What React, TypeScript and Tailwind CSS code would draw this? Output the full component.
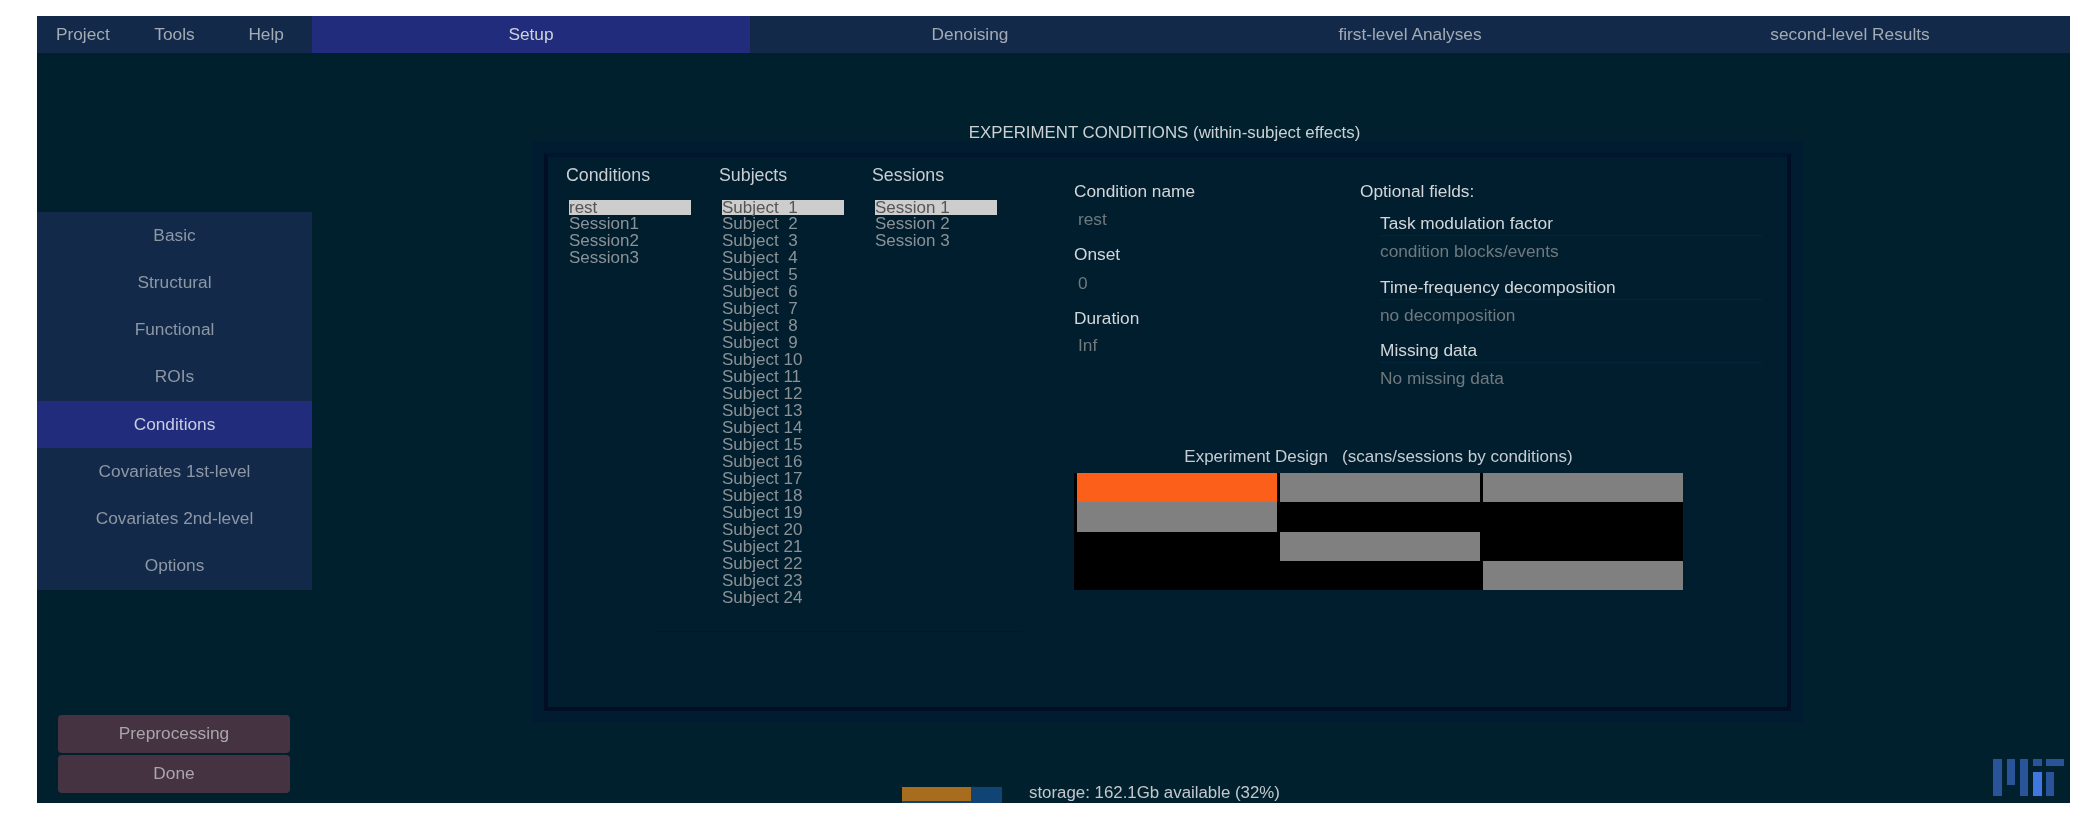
import React from "react";

const menus = ["Project", "Tools", "Help"];
const sections = ["Basic", "Structural", "Functional", "ROIs", "Conditions", "Covariates 1st-level", "Covariates 2nd-level", "Options"];
const conditions = ["rest", "Session1", "Session2", "Session3"];
const sessions = ["Session 1", "Session 2", "Session 3"];
const subjects = Array.from({ length: 24 }, (_, i) => (i < 9 ? `Subject  ${i + 1}` : `Subject ${i + 1}`));

function List({ title, items }: { title: string; items: string[] }) {
  return (
    <div className="w-[153px] shrink-0">
      <div className="text-[17.8px] leading-5 text-[#c9ced2]">{title}</div>
      <div className="mt-[15px] ml-[3px] w-[122px] text-[17px] text-[#8b9296]">
        {items.map((item, i) =>
          i === 0 ? (
            <div key={item} className="mt-[2px] h-[15px] whitespace-pre bg-[#cdcdcd] leading-[15px] text-[#555555]">
              {item}
            </div>
          ) : (
            <div key={item} className="whitespace-pre leading-[17px]">
              {item}
            </div>
          ),
        )}
      </div>
    </div>
  );
}

function Field({ label, value, className }: { label: string; value: string; className: string }) {
  return (
    <div className={className}>
      <div className="w-[382px] border-b border-[#02253a] pb-[2px] leading-5 text-[#d3d7da]">{label}</div>
      <div className="mt-[5px] leading-5 text-[#70797e]">{value}</div>
    </div>
  );
}

function MitLogo() {
  return (
    <svg width="71" height="37" viewBox="0 0 71 37" className="mb-[7px] mr-[6px] blur-[0.6px]">
      <g fill="#2a5499">
        <rect x="0" y="0" width="9" height="37" />
        <rect x="14" y="0" width="8" height="26" />
        <rect x="27" y="0" width="8" height="37" />
        <rect x="40" y="0" width="9" height="7" />
        <rect x="53" y="0" width="18" height="7" />
        <rect x="53" y="13" width="8" height="24" />
      </g>
      <rect x="40" y="13" width="9" height="24" fill="#3f78e0" />
    </svg>
  );
}

export default function App() {
  return (
    <div className="h-screen w-full overflow-hidden bg-white pt-4 pl-[37px] pr-6 font-['Liberation_Sans',Arial,sans-serif]">
      <div className="flex h-[787px] flex-col bg-[#01202e] text-[17.3px] blur-[0.4px]">
        <div className="flex h-[37px] shrink-0 items-center bg-[#12294a] text-[#a3abb4]">
          <div className="grid w-[275px] shrink-0 grid-cols-3 text-center">
            {menus.map((m) => (
              <span key={m}>{m}</span>
            ))}
          </div>
          <div className="flex h-full w-[438px] shrink-0 items-center justify-center bg-[#212d7c] text-[#d0d3da]">Setup</div>
          <div className="flex h-full flex-1 items-center justify-center">Denoising</div>
          <div className="flex h-full flex-1 items-center justify-center">first-level Analyses</div>
          <div className="flex h-full flex-1 items-center justify-center">second-level Results</div>
        </div>

        <div className="flex min-h-0 flex-1">
          <div className="flex w-[275px] shrink-0 flex-col pt-[159px]">
            <div className="bg-[#12294a] text-[#8e98a4]">
              {sections.map((s) => (
                <div
                  key={s}
                  className={
                    s === "Conditions"
                      ? "flex h-[47.25px] items-center justify-center bg-[#212d7c] text-[#c8cee0]"
                      : "flex h-[47.25px] items-center justify-center"
                  }
                >
                  {s}
                </div>
              ))}
            </div>
            <div className="mt-auto mb-[10px] ml-[21px] flex w-[232px] flex-col gap-[2px] text-[#aaa6ab]">
              <div className="flex h-[38px] items-center justify-center rounded-[4px] bg-[#453341]">Preprocessing</div>
              <div className="flex h-[38px] items-center justify-center rounded-[4px] bg-[#453341]">Done</div>
            </div>
          </div>

          <div className="flex min-w-0 flex-1 flex-col">
            <div className="ml-[232px] mt-[70px] w-[1247px] pr-[6px] text-center text-[16.85px] leading-5 text-[#cdd1d5]">
              EXPERIMENT CONDITIONS (within-subject effects)
            </div>
            <div className="ml-[232px] mt-[10px] flex h-[558px] w-[1247px] border-4 border-[#020d26] border-t-[#01152c] bg-[#001e2e] pl-[18px] shadow-[0_0_0_12px_#011b30]">
              <div className="flex w-[508px] shrink-0 flex-col pt-[8px]">
                <div className="flex">
                  <List title="Conditions" items={conditions} />
                  <List title="Subjects" items={subjects} />
                  <List title="Sessions" items={sessions} />
                </div>
                <div className="ml-[87px] mt-[25px] w-[370px] border-t border-[#011a29]" />
              </div>

              <div className="flex flex-col pt-[24px]">
                <div className="flex">
                  <div className="w-[286px] shrink-0 leading-5">
                    <div className="text-[#d3d7da]">Condition name</div>
                    <div className="mt-[8px] pl-[4px] text-[#70797e]">rest</div>
                    <div className="mt-[15px] text-[#d3d7da]">Onset</div>
                    <div className="mt-[9px] pl-[4px] text-[#70797e]">0</div>
                    <div className="mt-[15px] text-[#d3d7da]">Duration</div>
                    <div className="mt-[7px] pl-[4px] text-[#70797e]">Inf</div>
                  </div>
                  <div>
                    <div className="leading-5 text-[#d3d7da]">Optional fields:</div>
                    <div className="pl-[20px]">
                      <Field className="mt-[12px]" label="Task modulation factor" value="condition blocks/events" />
                      <Field className="mt-[16px]" label="Time-frequency decomposition" value="no decomposition" />
                      <Field className="mt-[15px]" label="Missing data" value="No missing data" />
                    </div>
                  </div>
                </div>

                <div className="mt-[59px] w-[609px] whitespace-pre text-center text-[17px] leading-5 text-[#c6ccd1]">
                  {"Experiment Design   (scans/sessions by conditions)"}
                </div>
                <div className="mt-[6px] grid h-[117px] w-[609px] grid-cols-[200px_200px_200px] grid-rows-4 gap-x-[3px] bg-black pl-[3px]">
                  <div className="bg-[#fb5f19]" />
                  <div className="bg-[#808080]" />
                  <div className="bg-[#808080]" />
                  <div className="bg-[#808080]" />
                  <div />
                  <div />
                  <div />
                  <div className="bg-[#808080]" />
                  <div />
                  <div />
                  <div />
                  <div className="bg-[#808080]" />
                </div>
              </div>
            </div>

            <div className="mt-auto flex items-end">
              <div className="ml-[590px] flex h-[16px] w-[100px] bg-[#0f4474]">
                <div className="h-[14px] w-[69px] bg-[#a86c1f]" />
              </div>
              <div className="ml-[27px] text-[16.85px] leading-5 text-[#c4c8cc]">storage: 162.1Gb available (32%)</div>
              <div className="ml-auto">
                <MitLogo />
              </div>
            </div>
          </div>
        </div>
      </div>
    </div>
  );
}
